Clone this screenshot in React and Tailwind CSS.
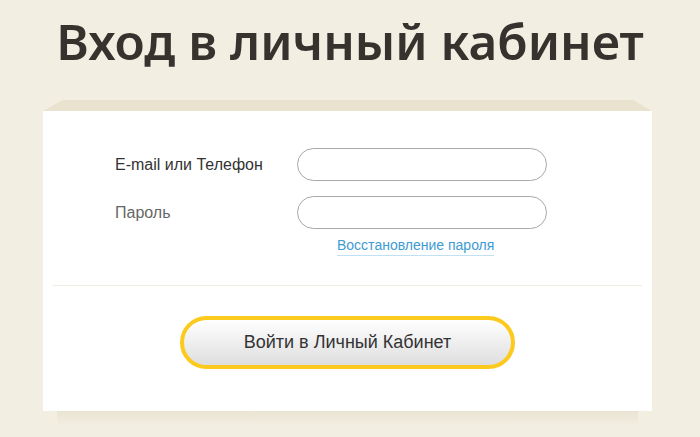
export default function App() {
  return (
    <div className="min-h-[437px] w-[700px] bg-[#f2eee2] overflow-hidden">
      <h1 className="pt-[9px] h-[100px] text-center text-[49.5px] leading-[64px] font-semibold text-[#37322d] [font-family:'Noto_Sans',sans-serif]">
        Вход в личный кабинет
      </h1>
      <div className="ml-[43px] w-[609px]">
        <div className="h-[11px] bg-[#e8e2cf] [clip-path:polygon(20px_0,calc(100%-19px)_0,100%_100%,0_100%)]"></div>
        <div className="bg-white h-[300px] pt-[37px] [font-family:'Liberation_Sans',Arial,sans-serif]">
          <div className="flex items-center h-[33px]">
            <label className="w-[254px] pl-[72px] text-[16px] text-[#333]">E-mail или Телефон</label>
            <div className="w-[250px] h-[33px] rounded-full border border-[#a8a8a8] bg-white"></div>
          </div>
          <div className="flex items-center h-[33px] mt-[15px]">
            <label className="w-[254px] pl-[72px] text-[16px] text-[#666]">Пароль</label>
            <div className="w-[250px] h-[33px] rounded-full border border-[#a8a8a8] bg-white"></div>
          </div>
          <div className="flex pl-[294px] mt-[7px]">
            <a className="text-[14px] leading-[18px] text-[#3d9bd3] border-b border-[#bfe1f3] pb-[1px]">Восстановление пароля</a>
          </div>
          <div className="mx-[10px] mt-[29px] h-px bg-[#efece2]"></div>
          <div className="flex justify-center mt-[30px]">
            <div className="w-[335px] h-[53px] rounded-full border-[4px] border-[#fcc91d] bg-gradient-to-b from-[#ffffff] to-[#dedede] flex items-center justify-center text-[18px] text-[#333]">
              Войти в Личный Кабинет
            </div>
          </div>
        </div>
        <div className="mx-[14px] h-[15px] bg-gradient-to-b from-[#e9e4d2] to-[#f2eee2]"></div>
      </div>
    </div>
  );
}
